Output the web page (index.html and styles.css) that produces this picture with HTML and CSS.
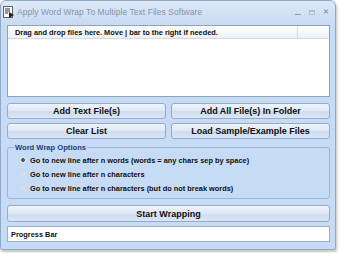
FILE: index.html
```html
<!DOCTYPE html>
<html>
<head>
<meta charset="utf-8">
<link rel="stylesheet" href="styles.css">
</head>
<body>
<div class="window">
  <div class="titlebar">
    <svg class="appicon" width="12" height="12" viewBox="0 0 12 12">
      <rect x="0.5" y="0.5" width="9" height="11" fill="#fafafa" stroke="#666" stroke-width="1"/>
      <path d="M2 3h5M2 5h5M2 7h3" stroke="#333" stroke-width="1"/>
      <path d="M6 6l5 3-5 3z" fill="#222"/>
    </svg>
    <span class="title">Apply Word Wrap To Multiple Text Files Software</span>
    <div class="controls">
      <span class="ctl min"></span>
      <span class="ctl max"></span>
      <span class="ctl close">✕</span>
    </div>
  </div>
  <div class="client">
    <div class="listbox">
      <div class="listhead">
        <div class="col1">Drag and drop files here. Move | bar to the right if needed.</div>
        <div class="col2"></div>
      </div>
    </div>
    <div class="btnrow first">
      <div class="btn">Add Text File(s)</div>
      <div class="btn">Add All File(s) In Folder</div>
    </div>
    <div class="btnrow">
      <div class="btn">Clear List</div>
      <div class="btn">Load Sample/Example Files</div>
    </div>
    <fieldset class="group">
      <legend>Word Wrap Options</legend>
      <div class="radio"><span class="dot on"></span>Go to new line after n words (words = any chars sep by space)</div>
      <div class="radio"><span class="dot"></span>Go to new line after n characters</div>
      <div class="radio"><span class="dot"></span>Go to new line after n characters (but do not break words)</div>
    </fieldset>
    <div class="btn wide">Start Wrapping</div>
    <div class="progress">Progress Bar</div>
  </div>
</div>
</body>
</html>
```
FILE: styles.css
```css
* { box-sizing: border-box; }
html, body { margin: 0; padding: 0; background: #fff; }
body { width: 340px; height: 253px; overflow: hidden; font-family: "Liberation Sans", Arial, sans-serif; }
.window {
  width: 336px; height: 250px;
  background: #c6dbf5;
  border: 1px solid #8ea9c9;
  border-radius: 6px 6px 2px 2px;
  box-shadow: 1px 2px 3px rgba(0,0,0,0.25);
  display: flex; flex-direction: column;
}
.titlebar {
  height: 24px; flex: none;
  display: flex; align-items: center;
  padding: 0 6px 2px 2px;
  background: linear-gradient(#dde9f8, #c8dbf3);
  border-radius: 5px 5px 0 0;
}
.appicon { flex: none; }
.title { margin-left: 2px; font-size: 8.4px; color: #8494a8; white-space: nowrap; letter-spacing: 0.1px; }
.controls { margin-left: auto; display: flex; align-items: center; gap: 8px; color: #8f9db0; }
.ctl.min { width: 6px; height: 1px; background: #8f9db0; margin-top: 4px; }
.ctl.max { width: 6px; height: 5px; border: 1px solid #b3bfcd; border-top-width: 2px; }
.ctl.close { font-size: 7px; font-weight: bold; }
.client { flex: 1; padding: 0 5px 6px 6px; display: flex; flex-direction: column; }
.listbox {
  height: 72px; flex: none;
  background: #fff;
  border: 1px solid #8da3bf;
}
.listhead {
  display: flex; height: 13px;
  background: linear-gradient(#ffffff, #eef1f5);
  border-bottom: 1px solid #d5dbe3;
}
.col1 { width: 290px; font-size: 7.4px; font-weight: bold; color: #111; padding: 2px 0 0 7px; border-right: 1px solid #d5dbe3; white-space: nowrap; }
.col2 { flex: 1; }
.btnrow { display: flex; gap: 5px; margin-top: 4px; flex: none; }
.btnrow.first { margin-top: 6px; }
.btn {
  flex: 1; height: 16px;
  display: flex; align-items: center; justify-content: center;
  font-size: 9px; font-weight: bold; color: #111;
  background: linear-gradient(#eef4fc 0%, #dde8f6 50%, #cfdcef 51%, #dae6f5 100%);
  border: 1px solid #96abc6;
  border-radius: 3px;
}
.group {
  flex: none;
  margin: 4px 0 0 0; padding: 1px 0 3px 12px;
  border: 1px solid #9fb4cf; border-radius: 3px;
}
.group legend { font-size: 7.6px; line-height: 9px; font-weight: bold; color: #1d3f7a; padding: 0 1px; margin-left: -6px; }
.radio { display: flex; align-items: center; height: 14px; font-size: 7.4px; font-weight: bold; color: #111; white-space: nowrap; }
.dot { width: 6px; height: 6px; border-radius: 50%; background: #d2deec; margin-right: 4px; flex: none; }
.dot.on { background: radial-gradient(circle, #555 0 1.5px, #d8e2ee 2.2px); }
.btn.wide { flex: none; margin-top: 6px; height: 17px; }
.progress {
  flex: none;
  margin-top: 4px; height: 16px;
  background: #fff; border: 1px solid #9db0c9;
  font-size: 7.4px; font-weight: bold; color: #111;
  display: flex; align-items: center; padding-left: 3px;
}
```
